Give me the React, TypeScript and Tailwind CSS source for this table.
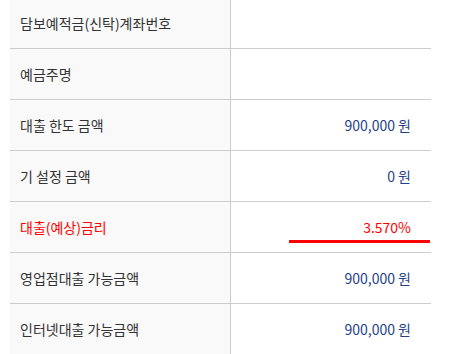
const rows: { label: string; value: string; highlight?: boolean }[] = [
  { label: "담보예적금(신탁)계좌번호", value: "" },
  { label: "예금주명", value: "" },
  { label: "대출 한도 금액", value: "900,000 원" },
  { label: "기 설정 금액", value: "0 원" },
  { label: "대출(예상)금리", value: "3.570%", highlight: true },
  { label: "영업점대출 가능금액", value: "900,000 원" },
  { label: "인터넷대출 가능금액", value: "900,000 원" },
];

const App = () => {
  return (
    <div
      className="w-[455px] h-[354px] overflow-hidden bg-white pl-[10px]"
      style={{ fontFamily: '"Noto Sans CJK KR", "Noto Sans", sans-serif' }}
    >
      <div className="w-[421px] -mt-[2px]">
        {rows.map((r) => (
          <div key={r.label} className="flex h-[51px] border-b border-[#cccccc]">
            <div
              className={`w-[221px] shrink-0 bg-[#f9f9f9] border-r border-[#cccccc] flex items-center pl-[10px] text-[14px] ${
                r.highlight ? "text-[#ff0000]" : "text-[#333333]"
              }`}
            >
              {r.label}
            </div>
            <div
              className={`relative flex-1 flex items-center justify-end pr-[20px] text-[14px] ${
                r.highlight ? "text-[#ff0000]" : "text-[#1f3f86]"
              }`}
            >
              {r.value}
              {r.highlight && (
                <span className="absolute right-[1px] top-[38px] w-[141px] h-[3px] bg-[#ff0000]" />
              )}
            </div>
          </div>
        ))}
      </div>
    </div>
  );
};

export default App;
